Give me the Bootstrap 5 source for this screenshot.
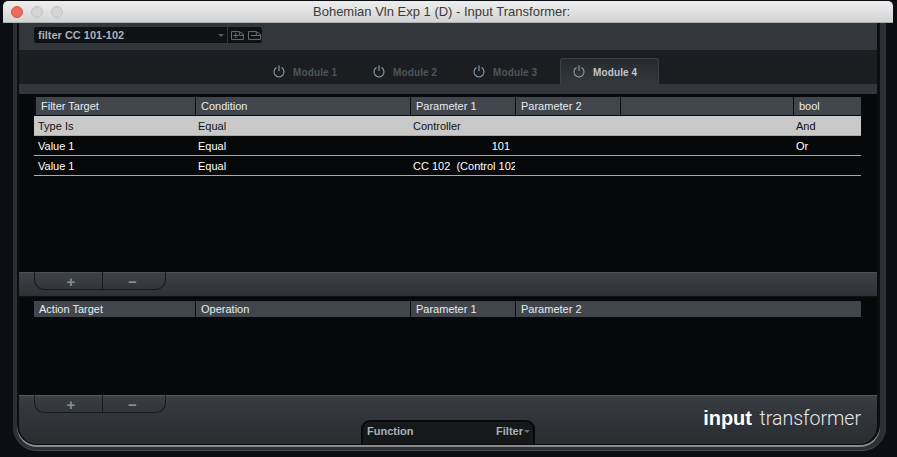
<!DOCTYPE html>
<html lang="en">
<head>
<meta charset="utf-8">
<title>Input Transformer</title>
<link href="https://cdn.jsdelivr.net/npm/bootstrap@5.3.0/dist/css/bootstrap.min.css" rel="stylesheet">
<style>
html,body{height:457px;overflow:hidden}
body{background:#0b0e12;font-family:"Liberation Sans",Arial,sans-serif;font-size:11px;padding-top:1px}
.win-title{height:22px;margin:0 4px 0 3px;background:linear-gradient(#eeeeee,#d4d4d4);border-radius:5px 5px 0 0;border-bottom:1px solid #b0b0b0;position:relative;color:#3a3a3a;font-size:13px;line-height:22px}
.tl{width:12px;height:12px;border-radius:50%;background:#d5d5d5;border:1px solid #c2c2c2}
.tl-red{background:#ec6a5e;border-color:#d65548}
.lights{padding:0 0 0 8px;gap:8px;height:21px}
.win-text{margin-left:310px;white-space:nowrap}
.rim{margin-left:13px;width:873px;height:428px;background:#2d2f33;border-radius:0 0 24px 24px;padding:0 6px 5px 4px;border-bottom:1px solid #4a4c50}
.rim-in{height:100%;background:#0b0c0e;border:solid #0d0e10;border-width:0 3px 1px 2px;border-radius:0 0 20px 20px;box-shadow:0 2px 0 #88898b}
.panel{height:100%;border-radius:0 0 18px 18px;overflow:hidden;background:#07080a}
.panel>div{flex-shrink:0}
.toolbar{height:27px;padding:4px 0 0 15px;background:#33363b}
.sel{width:228px;height:16px;background:#0f1113;border-radius:3px;font-weight:700;color:#aab2ba;line-height:16px;padding-left:4px}
.sel-name{width:184px}
.caret-d{width:0;height:0;border:solid transparent;border-width:3px 3px 0;border-top-color:#555a60}
.sel-sep{width:1px;height:16px;background:#30343a;margin:0 3px 0 3px}
.tab-band{height:34px;background:#1b1d20;padding:8px 0 0 241px}
.mod{width:100px;height:26px;padding-left:13px;gap:8px;color:#50555b;font-size:10px;letter-spacing:.12px;font-weight:700;border-radius:3px 3px 0 0}
.mod span{padding-top:2px}
.mod-on{background:linear-gradient(#26292d,#34373c);color:#c4c8cc;border:solid #3d4045;border-width:1px 1px 0;width:99px;padding-left:12px}
.band{height:10px;background:#33363b}
.area{height:178px;padding:3px 16px 0 15px;background:#07080a}
.area-two{height:98px;padding-top:4px}
.tbl{width:827px;table-layout:fixed;margin:0;border-collapse:separate;border-spacing:0;color:#fff;font-size:11px}
.tbl th{height:18px;background:#41464c;font-weight:400;color:#e8ecef;padding:0 0 0 5px;border-left:1px solid #0c0d0f;line-height:18px;border-bottom:0;box-shadow:none}
.tbl .hd-first{border-left:2px solid #0c0d0f;padding-left:5px}
.tbl-two th{height:16px;line-height:16px}
.tbl-two th:first-child{padding-left:5px;border-left:0}
.tbl td{height:20px;padding:1px 0 0 3px;background:#07080a;color:#fff;border-bottom:1px solid #a9a9a9;line-height:18px;white-space:nowrap;overflow:hidden;box-shadow:none}
.tbl td:first-child{padding-left:4px}
.tbl .spacer td{height:1px;border:0;padding:0;line-height:0;background:#07080a}
.tbl .sel-row td{background:#c9c9c9;color:#111}
.tbl td.num{text-align:right;padding-right:5px}
.c1{width:161px}.c2{width:215px}.c3{width:105px}.c4{width:105px}.c5{width:173px}.c6{width:68px}
.bar{height:25px;background:linear-gradient(#3e4146,#2d3034);padding-left:15px;border-top:1px solid #4a4d52;border-bottom:1px solid #111}
.pm{height:18px;width:132px;border:1px solid #17191b;border-top:0;border-radius:0 0 10px 10px;margin-top:-1px}
.pm-btn{height:17px;padding:1px 0 0;border:0;border-radius:0;background:transparent;color:#8b8e92;font:700 15px/15px "Liberation Sans",sans-serif}
.pm-plus{width:67px;padding-left:5px}
.pm-minus{flex:1;padding-right:3px;border-left:1px solid #17191b}
.foot{height:49px;background:linear-gradient(#3a3d42 0,#33363b 30%,#2a2c30 100%);border-top:1px solid #55585c;padding-left:15px;display:grid;grid-template-columns:327px 174px 1fr}
.func{align-self:end;height:24px;background:#16181a;border:2px solid #07080a;border-bottom:0;border-radius:9px 9px 0 0;padding:0 3px 3px 4px;font-weight:700;color:#a9b2ba;line-height:17px}
.func-caret{border-top-color:#6b7076;margin-left:1px}
.logo{text-align:right;padding:7px 16px 0 0;font-size:20px;line-height:30px;color:#e6e7e8;white-space:nowrap}
.logo b{font-family:"Liberation Sans",sans-serif;font-weight:700;color:#fff}
.logo span{font-family:Roboto,sans-serif;font-weight:300;font-size:19.5px;margin-left:2px}
</style>
</head>
<body>
<div class="win-title">
  <div class="d-flex align-items-center lights position-absolute"><span class="tl tl-red"></span><span class="tl"></span><span class="tl"></span></div>
  <div class="win-text">Bohemian Vln Exp 1 (D) - Input Transformer:</div>
</div>
<div class="rim"><div class="rim-in"><div class="panel d-flex flex-column">
  <div class="toolbar">
    <div class="sel d-flex align-items-center">
      <span class="sel-name">filter CC 101-102</span>
      <span class="caret-d"></span><span class="sel-sep"></span>
      <svg width="14" height="9" viewBox="0 0 14 9" fill="none" stroke="#6d7278"><path d="M.5 8.500V.5h8l4.500 3v5z"/><path d="M2.500 4.500h5M5 2v5M8.500 1v3.500h4.500"/></svg>
      <svg class="ms-1" width="14" height="9" viewBox="0 0 14 9" fill="none" stroke="#6d7278"><path d="M.5 8.500V.5h8l4.500 3v5z"/><path d="M3 4.500h10M8.500 1v3.500"/></svg>
    </div>
  </div>
  <div class="tab-band d-flex">
    <div class="mod d-flex align-items-center"><svg width="12" height="13" viewBox="0 0 12 13" fill="none" stroke="#8da0b0" stroke-width="1.100"><path d="M3.500 2.600a5 5 0 1 0 5 0M6 .5v5.500"/></svg><span>Module 1</span></div>
    <div class="mod d-flex align-items-center"><svg width="12" height="13" viewBox="0 0 12 13" fill="none" stroke="#8da0b0" stroke-width="1.100"><path d="M3.500 2.600a5 5 0 1 0 5 0M6 .5v5.500"/></svg><span>Module 2</span></div>
    <div class="mod d-flex align-items-center"><svg width="12" height="13" viewBox="0 0 12 13" fill="none" stroke="#8da0b0" stroke-width="1.100"><path d="M3.500 2.600a5 5 0 1 0 5 0M6 .5v5.500"/></svg><span>Module 3</span></div>
    <div class="mod mod-on d-flex align-items-center"><svg width="12" height="13" viewBox="0 0 12 13" fill="none" stroke="#8da0b0" stroke-width="1.100"><path d="M3.500 2.600a5 5 0 1 0 5 0M6 .5v5.500"/></svg><span>Module 4</span></div>
  </div>
  <div class="band"></div>
  <div class="area">
    <table class="tbl">
      <colgroup><col class="c1"><col class="c2"><col class="c3"><col class="c4"><col class="c5"><col class="c6"></colgroup>
      <thead><tr><th class="hd-first">Filter Target</th><th>Condition</th><th>Parameter 1</th><th>Parameter 2</th><th></th><th>bool</th></tr></thead>
      <tbody>
        <tr class="spacer"><td colspan="6"></td></tr>
        <tr class="sel-row"><td>Type Is</td><td>Equal</td><td>Controller</td><td></td><td></td><td>And</td></tr>
        <tr><td>Value 1</td><td>Equal</td><td class="num">101</td><td></td><td></td><td>Or</td></tr>
        <tr><td>Value 1</td><td>Equal</td><td>CC 102&nbsp; (Control 102)</td><td></td><td></td><td></td></tr>
      </tbody>
    </table>
  </div>
  <div class="bar"><div class="pm d-flex"><button class="btn pm-btn pm-plus" type="button">+</button><button class="btn pm-btn pm-minus" type="button">−</button></div></div>
  <div class="area area-two">
    <table class="tbl tbl-two">
      <colgroup><col class="c1"><col class="c2"><col class="c3"><col class="c4"><col class="c5"><col class="c6"></colgroup>
      <thead><tr><th>Action Target</th><th>Operation</th><th>Parameter 1</th><th colspan="3">Parameter 2</th></tr></thead>
    </table>
  </div>
  <div class="foot">
    <div><div class="pm d-flex"><button class="btn pm-btn pm-plus" type="button">+</button><button class="btn pm-btn pm-minus" type="button">−</button></div></div>
    <div class="func d-flex align-items-center"><span class="flex-grow-1">Function</span><span>Filter</span><span class="caret-d func-caret"></span></div>
    <div class="logo"><b>input</b> <span>transformer</span></div>
  </div>
</div></div></div></div>
<script src="https://cdn.jsdelivr.net/npm/bootstrap@5.3.0/dist/js/bootstrap.bundle.min.js"></script>
</body>
</html>
